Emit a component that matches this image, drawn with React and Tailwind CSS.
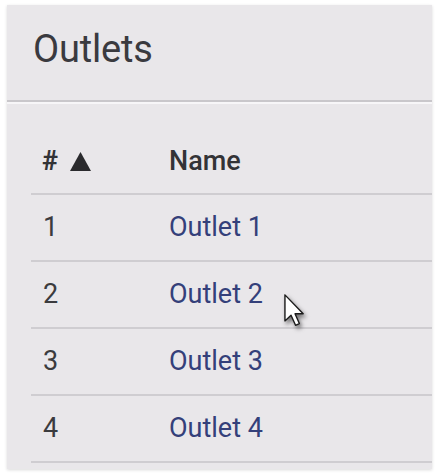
import React from "react";

const outlets = [
  { id: 1, name: "Outlet 1" },
  { id: 2, name: "Outlet 2" },
  { id: 3, name: "Outlet 3" },
  { id: 4, name: "Outlet 4" },
];

function Cursor() {
  return (
    <svg
      width="21"
      height="33"
      viewBox="0 0 12 19"
      className="absolute left-[284px] top-[294px] drop-shadow-[2px_3px_2px_rgba(0,0,0,0.5)]"
    >
      <path
        d="M0.5 0.5 L0.5 15.5 L4 12.2 L6.6 18 L8.8 17 L6.3 11.4 L11 11.4 Z"
        fill="#ffffff"
        stroke="#1a1a1a"
        strokeWidth="0.8"
        strokeLinejoin="round"
      />
    </svg>
  );
}

export default function App() {
  return (
    <div className="relative min-h-screen bg-white pt-[5px] pl-[7px] pr-[5px] font-['Roboto',sans-serif]">
      <div className="h-[464px] bg-[#e9e7ea] shadow-[0_1px_3px_rgba(0,0,0,0.15)]">
        {/* header */}
        <div className="flex h-[97px] items-center border-b-2 border-[#c9c7cb] pb-[6px] pl-[26px]">
          <h1 className="text-[38px] font-normal tracking-[-0.2px] text-[#3a3a3f]">
            Outlets
          </h1>
        </div>
        <div className="h-[2px] bg-[#f7f6f8]" />

        {/* table */}
        <div className="pl-[24px] pt-[26px]">
          <table className="w-full border-collapse text-[27px]">
            <thead>
              <tr className="h-[64px] border-b-2 border-[#cfcdd1]">
                <th className="w-[127px] pl-[11px] text-left font-bold text-[#333336]">
                  <span className="flex items-center gap-[12px]">
                    <span className="text-[27px] leading-none">#</span>
                    <svg width="21" height="19" viewBox="0 0 21 19">
                      <path d="M10.5 0 L21 19 L0 19 Z" fill="#2a2a2d" />
                    </svg>
                  </span>
                </th>
                <th className="pl-[11px] text-left font-medium text-[#333336]">
                  Name
                </th>
              </tr>
            </thead>
            <tbody>
              {outlets.map((o) => (
                <tr key={o.id} className="h-[67px] border-b-2 border-[#cfcdd1]">
                  <td className="pl-[12px] text-[#3b3b3e]">{o.id}</td>
                  <td className="pl-[11px] text-[#34407a]">{o.name}</td>
                </tr>
              ))}
            </tbody>
          </table>
        </div>
      </div>
      <Cursor />
    </div>
  );
}
